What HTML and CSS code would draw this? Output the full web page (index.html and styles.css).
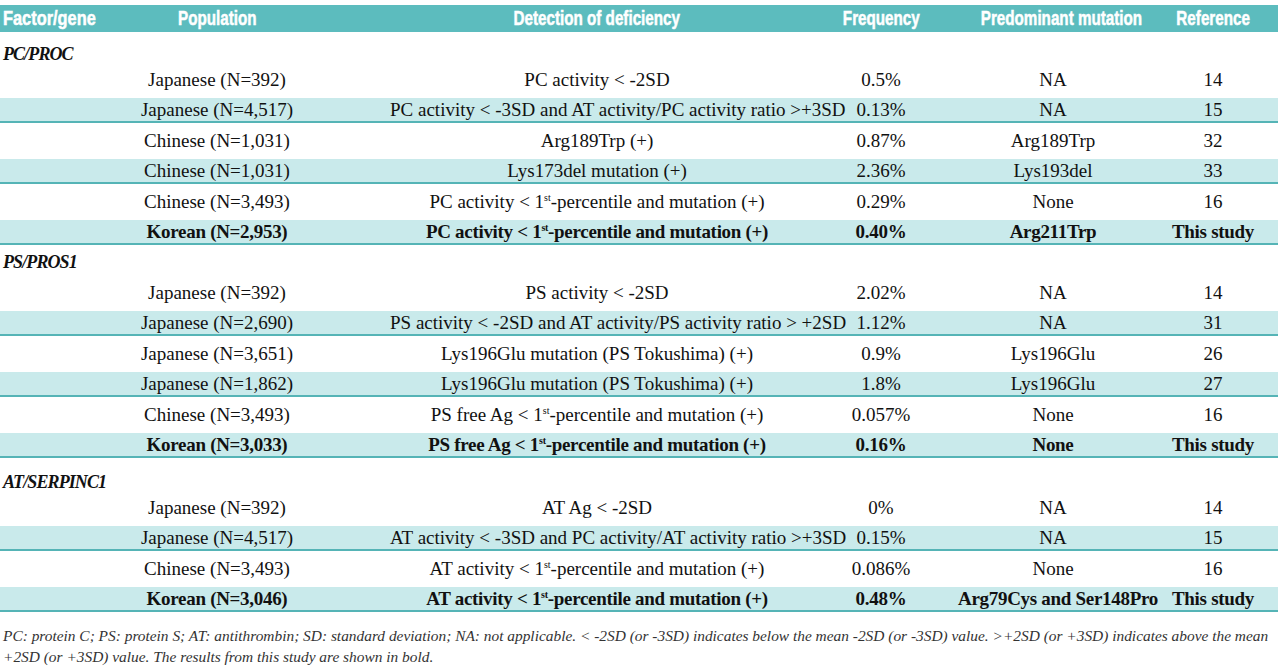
FILE: index.html
```html
<!DOCTYPE html>
<html>
<head>
<meta charset="utf-8">
<link rel="stylesheet" href="styles.css">
</head>
<body>
<table class="data">
  <colgroup>
    <col class="c-gene"><col class="c-pop"><col class="c-det"><col class="c-freq"><col class="c-mut"><col class="c-ref">
  </colgroup>
  <thead>
    <tr class="head">
      <th class="first"><span class="hl">Factor/gene</span></th>
      <th><span class="hl">Population</span></th>
      <th><span class="hl">Detection of deficiency</span></th>
      <th><span class="hl">Frequency</span></th>
      <th><span class="hl">Predominant mutation</span></th>
      <th><span class="hl">Reference</span></th>
    </tr>
  </thead>
  <tbody>
    <tr class="section sec-a"><td colspan="6">PC/PROC</td></tr>
    <tr class="row"><td></td><td>Japanese (N=392)</td><td>PC activity &lt; -2SD</td><td>0.5%</td><td>NA</td><td>14</td></tr>
    <tr class="row shade"><td></td><td>Japanese (N=4,517)</td><td>PC activity &lt; -3SD and AT activity/PC activity ratio &gt;+3SD</td><td>0.13%</td><td>NA</td><td>15</td></tr>
    <tr class="row"><td></td><td>Chinese (N=1,031)</td><td>Arg189Trp (+)</td><td>0.87%</td><td>Arg189Trp</td><td>32</td></tr>
    <tr class="row shade"><td></td><td>Chinese (N=1,031)</td><td>Lys173del mutation (+)</td><td>2.36%</td><td>Lys193del</td><td>33</td></tr>
    <tr class="row"><td></td><td>Chinese (N=3,493)</td><td>PC activity &lt; 1<sup>st</sup>-percentile and mutation (+)</td><td>0.29%</td><td>None</td><td>16</td></tr>
    <tr class="row shade bold"><td></td><td>Korean (N=2,953)</td><td>PC activity &lt; 1<sup>st</sup>-percentile and mutation (+)</td><td>0.40%</td><td>Arg211Trp</td><td>This study</td></tr>

    <tr class="section sec-b"><td colspan="6">PS/PROS1</td></tr>
    <tr class="row"><td></td><td>Japanese (N=392)</td><td>PS activity &lt; -2SD</td><td>2.02%</td><td>NA</td><td>14</td></tr>
    <tr class="row shade"><td></td><td>Japanese (N=2,690)</td><td>PS activity &lt; -2SD and AT activity/PS activity ratio &gt; +2SD</td><td>1.12%</td><td>NA</td><td>31</td></tr>
    <tr class="row"><td></td><td>Japanese (N=3,651)</td><td>Lys196Glu mutation (PS Tokushima) (+)</td><td>0.9%</td><td>Lys196Glu</td><td>26</td></tr>
    <tr class="row shade"><td></td><td>Japanese (N=1,862)</td><td>Lys196Glu mutation (PS Tokushima) (+)</td><td>1.8%</td><td>Lys196Glu</td><td>27</td></tr>
    <tr class="row"><td></td><td>Chinese (N=3,493)</td><td>PS free Ag &lt; 1<sup>st</sup>-percentile and mutation (+)</td><td>0.057%</td><td>None</td><td>16</td></tr>
    <tr class="row shade bold"><td></td><td>Korean (N=3,033)</td><td>PS free Ag &lt; 1<sup>st</sup>-percentile and mutation (+)</td><td>0.16%</td><td>None</td><td>This study</td></tr>

    <tr class="section sec-c"><td colspan="6">AT/SERPINC1</td></tr>
    <tr class="row"><td></td><td>Japanese (N=392)</td><td>AT Ag &lt; -2SD</td><td>0%</td><td>NA</td><td>14</td></tr>
    <tr class="row shade"><td></td><td>Japanese (N=4,517)</td><td>AT activity &lt; -3SD and PC activity/AT activity ratio &gt;+3SD</td><td>0.15%</td><td>NA</td><td>15</td></tr>
    <tr class="row"><td></td><td>Chinese (N=3,493)</td><td>AT activity &lt; 1<sup>st</sup>-percentile and mutation (+)</td><td>0.086%</td><td>None</td><td>16</td></tr>
    <tr class="row shade bold"><td></td><td>Korean (N=3,046)</td><td>AT activity &lt; 1<sup>st</sup>-percentile and mutation (+)</td><td>0.48%</td><td>Arg79Cys and Ser148Pro</td><td>This study</td></tr>
  </tbody>
</table>
<p class="note"><span class="line">PC: protein C; PS: protein S; AT: antithrombin; SD: standard deviation; NA: not applicable. &lt; -2SD (or -3SD) indicates below the mean -2SD (or -3SD) value. &gt;+2SD (or +3SD) indicates above the mean</span><span class="line">+2SD (or +3SD) value. The results from this study are shown in bold.</span></p>
</body>
</html>
```

FILE: styles.css
```css
html, body {
  margin: 0;
  padding: 0;
  background: #ffffff;
}

body {
  font-family: "Liberation Serif", "Times New Roman", serif;
  color: #111111;
  width: 1280px;
}

.data {
  margin-top: 5px;
  width: 1278px;
  border-collapse: collapse;
  table-layout: fixed;
}

.c-gene { width: 44px; }
.c-pop { width: 346px; }
.c-det { width: 414px; }
.c-freq { width: 154px; }
.c-mut { width: 190px; }
.c-ref { width: 130px; }

.head th {
  background: #5cbcbe;
  color: #ffffff;
  font-family: "Liberation Sans", Arial, sans-serif;
  font-weight: bold;
  font-size: 19.5px;
  height: 27px;
  padding: 0;
  line-height: 27px;
  text-align: center;
  white-space: nowrap;
  overflow: visible;
  -webkit-text-stroke: 0.5px #ffffff;
}

.head .hl {
  display: inline-block;
  transform: scaleX(0.78);
  transform-origin: center;
}

.head th.first {
  text-align: left;
  padding-left: 3px;
}

.head th.first .hl {
  transform: scaleX(0.84);
  transform-origin: left center;
}

.section td {
  font-weight: bold;
  font-style: italic;
  font-size: 18px;
  letter-spacing: -0.9px;
  text-align: left;
  padding: 0 0 0 3px;
  line-height: 13px;
  white-space: nowrap;
}

.sec-a td { padding-top: 16px; padding-bottom: 1px; }
.sec-b td { padding-top: 11px; padding-bottom: 6px; }
.sec-c td { padding-top: 18px; padding-bottom: 1px; }

.row td {
  font-size: 19px;
  text-align: center;
  white-space: nowrap;
  overflow: visible;
  padding: 0;
  height: 36px;
  line-height: 36px;
}

.row.shade td {
  background: #c9eaeb;
  height: 23px;
  line-height: 23px;
  border-bottom: 2px solid #55b4b6;
}

.row.bold td {
  font-weight: bold;
  letter-spacing: -0.3px;
}

sup {
  font-size: 10px;
  line-height: 0;
  vertical-align: 7px;
}

.note {
  margin: 13px 0 0 0;
  padding-left: 3px;
  font-style: italic;
  font-size: 15.4px;
  line-height: 21px;
  color: #333333;
}

.note .line {
  display: block;
  white-space: nowrap;
}
```
